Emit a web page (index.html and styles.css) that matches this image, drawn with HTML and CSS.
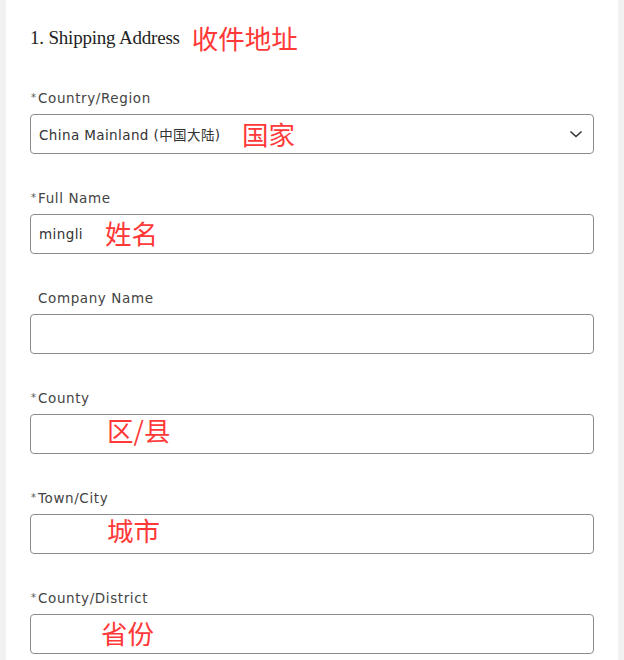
FILE: index.html
```html
<!DOCTYPE html>
<html lang="en">
<head>
<meta charset="utf-8">
<title>Shipping Address</title>
<link rel="stylesheet" href="styles.css">
</head>
<body>
<div class="panel">
  <div class="heading">
    <h2 class="title">1. Shipping Address</h2>
    <span class="note note-title">收件地址</span>
  </div>

  <div class="field">
    <label class="label"><span class="req">*</span>Country/Region</label>
    <div class="box select">
      <span class="value">China Mainland (中国大陆)</span>
      <span class="note note-country">国家</span>
      <svg class="chevron" width="14" height="10" viewBox="0 0 14 10"><path d="M1.5 2.5 L7 7.5 L12.5 2.5" fill="none" stroke="#333" stroke-width="1.6"/></svg>
    </div>
  </div>

  <div class="field">
    <label class="label"><span class="req">*</span>Full Name</label>
    <div class="box">
      <span class="value">mingli</span>
      <span class="note note-name">姓名</span>
    </div>
  </div>

  <div class="field">
    <label class="label"><span class="req"></span>Company Name</label>
    <div class="box"></div>
  </div>

  <div class="field">
    <label class="label"><span class="req">*</span>County</label>
    <div class="box">
      <span class="note note-county">区/县</span>
    </div>
  </div>

  <div class="field">
    <label class="label"><span class="req">*</span>Town/City</label>
    <div class="box">
      <span class="note note-city">城市</span>
    </div>
  </div>

  <div class="field">
    <label class="label"><span class="req">*</span>County/District</label>
    <div class="box">
      <span class="note note-province">省份</span>
    </div>
  </div>
</div>
</body>
</html>
```

FILE: styles.css
```css
html, body {
  margin: 0;
  padding: 0;
  background: #f2f2f2;
  height: 660px;
  overflow: hidden;
}

.panel {
  margin: 0 6px;
  background: #ffffff;
  padding: 23px 24px 0 24px;
  height: 660px;
  box-sizing: border-box;
  font-family: "DejaVu Sans", "Noto Sans CJK SC", sans-serif;
}

.heading {
  display: flex;
  align-items: center;
  height: 30px;
  margin-bottom: 35px;
}

.title {
  margin: 0;
  font-family: "Liberation Serif", "DejaVu Serif", serif;
  font-weight: normal;
  font-size: 19px;
  color: #222;
  letter-spacing: -0.2px;
}

.note {
  font-family: "Noto Sans CJK SC", sans-serif;
  font-size: 26.5px;
  line-height: 30px;
  color: #ff3838;
}

.note-title {
  margin-left: 12px;
}

.field {
  margin-bottom: 34px;
}

.label {
  display: flex;
  align-items: center;
  height: 20px;
  margin-bottom: 6px;
  font-size: 13.5px;
  letter-spacing: 0.6px;
  color: #444;
}

.req {
  display: inline-block;
  width: 7px;
  padding-left: 1px;
  font-size: 10px;
  letter-spacing: 0;
  color: #555;
  align-self: flex-start;
  margin-top: 5px;
  line-height: 10px;
}

.box {
  position: relative;
  height: 40px;
  box-sizing: border-box;
  border: 1px solid #8c8c8c;
  border-radius: 4px;
  display: flex;
  align-items: center;
  padding-left: 8px;
}

.value {
  font-size: 13.5px;
  letter-spacing: 0.4px;
  color: #333;
}

.box .note {
  position: absolute;
}

.note-country { left: 211px; top: 4px; }
.note-name { left: 74px; top: 3px; }
.note-county { left: 76px; top: 0px; }
.note-city { left: 76px; top: 0px; }
.note-province { left: 70px; top: 3px; }

.chevron {
  position: absolute;
  right: 10px;
  top: 14px;
}
```
